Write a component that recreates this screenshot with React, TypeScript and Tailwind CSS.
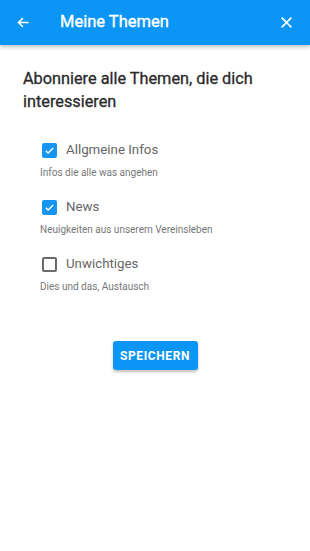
import React, { useState } from 'react';

interface Topic {
  id: string;
  label: string;
  hint: string;
}

const topics: Topic[] = [
  { id: 'infos', label: 'Allgmeine Infos', hint: 'Infos die alle was angehen' },
  { id: 'news', label: 'News', hint: 'Neuigkeiten aus unserem Vereinsleben' },
  { id: 'misc', label: 'Unwichtiges', hint: 'Dies und das, Austausch' },
];

const Checkbox: React.FC<{ checked: boolean }> = ({ checked }) =>
  checked ? (
    <span className="flex h-[15px] w-[15px] items-center justify-center rounded-[2px] bg-[#1795f2]">
      <svg width="11" height="11" viewBox="0 0 24 24" fill="none">
        <path d="M4 12.5l5 5L20 6.5" stroke="white" strokeWidth="3" />
      </svg>
    </span>
  ) : (
    <span className="h-[15px] w-[15px] rounded-[2px] border-2 border-[#6b6b6b]" />
  );

export default function App() {
  const [selected, setSelected] = useState<Record<string, boolean>>({ infos: true, news: true, misc: false });

  return (
    <div className="flex h-[551px] w-[310px] flex-col bg-white font-['Roboto',sans-serif]">
      <header className="z-10 flex h-[45px] items-center bg-[#0b96f6] pl-[16px] pr-[17px] text-white shadow-[0_2px_4px_rgba(0,0,0,0.25)]">
        <svg width="15" height="15" viewBox="0 0 24 24" fill="none">
          <path d="M20 12H4M11 5l-7 7 7 7" stroke="white" strokeWidth="2.4" />
        </svg>
        <h1 className="ml-[29px] flex-1 text-[16.5px] font-normal leading-none [-webkit-text-stroke:0.35px_white]">
          Meine Themen
        </h1>
        <svg width="13" height="13" viewBox="0 0 24 24" fill="none">
          <path d="M3 3l18 18M21 3L3 21" stroke="white" strokeWidth="2.8" />
        </svg>
      </header>

      <main className="flex flex-col px-[23px] pt-[22px]">
        <h2 className="text-[16.3px] font-normal leading-[23px] text-[#2a2a2a] [-webkit-text-stroke:0.3px_#2a2a2a]">
          Abonniere alle Themen, die dich interessieren
        </h2>

        <div className="mt-[27px] flex flex-col pl-[17px]">
          {topics.map((t) => (
            <div key={t.id} className="mb-[17px]">
              <button
                type="button"
                onClick={() => setSelected((s) => ({ ...s, [t.id]: !s[t.id] }))}
                className="flex h-[20px] items-center pl-[2px]"
              >
                <Checkbox checked={selected[t.id]} />
                <span className="ml-[9px] text-[13.3px] text-[#666]">{t.label}</span>
              </button>
              <p className="mt-[6px] text-[10px] leading-[14px] text-[#777]">{t.hint}</p>
            </div>
          ))}
        </div>

        <div className="mt-[30px] flex justify-center">
          <button
            type="button"
            className="h-[29px] w-[85px] rounded-[3px] bg-[#0b96f6] text-[12px] font-bold tracking-[0.6px] text-white shadow-[0_2px_3px_rgba(0,0,0,0.25)]"
          >
            SPEICHERN
          </button>
        </div>
      </main>
    </div>
  );
}
